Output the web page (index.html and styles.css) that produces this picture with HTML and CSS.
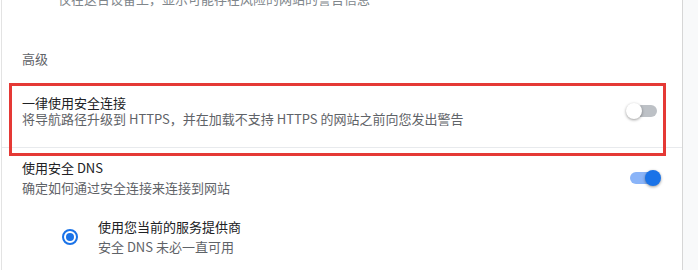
FILE: index.html
```html
<!DOCTYPE html>
<html lang="zh-CN">
<head>
    <meta charset="UTF-8">
    <title>安全</title>
    <link rel="stylesheet" href="styles.css">
</head>
<body>
    <div class="page">
        <div class="card">
            <div class="clip-line">仅在这台设备上，显示可能存在风险的网站的警告信息</div>
            <div class="section-title">高级</div>

            <div class="row row-first">
                <div class="row-text">
                    <div class="label">一律使用安全连接</div>
                    <div class="sub-label">将导航路径升级到 HTTPS，并在加载不支持 HTTPS 的网站之前向您发出警告</div>
                </div>
                <span class="toggle"><span class="track"></span><span class="knob"></span></span>
                <div class="highlight"></div>
            </div>

            <div class="row row-dns">
                <div class="row-text">
                    <div class="label">使用安全 DNS</div>
                    <div class="sub-label">确定如何通过安全连接来连接到网站</div>
                </div>
                <span class="toggle on"><span class="track"></span><span class="knob"></span></span>
            </div>

            <div class="radio-row">
                <span class="radio"><span class="dot"></span></span>
                <div class="row-text">
                    <div class="label">使用您当前的服务提供商</div>
                    <div class="sub-label">安全 DNS 未必一直可用</div>
                </div>
            </div>
        </div>
        <div class="side"></div>
    </div>
</body>
</html>
```

FILE: styles.css
```css
html, body {
    margin: 0;
    height: 270px;
    overflow: hidden;
}
body {
    font-family: "Noto Sans CJK SC", "Noto Sans", sans-serif;
    font-size: 13px;
    color: #202124;
    background: #fff;
}
.page {
    display: flex;
    height: 270px;
}
.card {
    box-sizing: border-box;
    width: 682px;
    margin-left: 1px;
    border-left: 1px solid #e3e3e3;
    border-right: 1px solid #d6d6d6;
    background: #fff;
    flex-shrink: 0;
}
.side {
    flex: 1;
    background: #f8f9fa;
}
.clip-line {
    margin-top: -11px;
    padding-left: 56px;
    line-height: 20px;
    color: #80868b;
}
.section-title {
    margin-top: 40px;
    padding-left: 20px;
    line-height: 20px;
    color: #5f6368;
}
.row {
    position: relative;
    display: flex;
    align-items: center;
    padding: 0 20px;
}
.row-text {
    flex: 1;
}
.sub-label {
    color: #5f6368;
}
.row-first {
    padding-top: 26px;
    padding-bottom: 20px;
    border-bottom: 1px solid #e8eaed;
    line-height: 16px;
}
.row-dns {
    padding-top: 10px;
    line-height: 20px;
}
.highlight {
    position: absolute;
    top: 14px;
    left: 7px;
    right: 16px;
    bottom: -9px;
    border: 3px solid #e53935;
}

/* toggle */
.toggle {
    position: relative;
    width: 36px;
    height: 16px;
    flex-shrink: 0;
}
.toggle .track {
    position: absolute;
    left: 4px;
    top: 2px;
    width: 27px;
    height: 12px;
    border-radius: 6px;
    background: #bdc1c6;
}
.toggle .knob {
    position: absolute;
    left: 0;
    top: 0;
    width: 16px;
    height: 16px;
    border-radius: 50%;
    background: #fff;
    box-shadow: 0 1px 3px rgba(0, 0, 0, 0.4);
}
.toggle.on .track {
    background: #8ab4f8;
}
.toggle.on .knob {
    left: 19px;
    background: #1a73e8;
}

/* radio */
.radio-row {
    display: flex;
    align-items: center;
    margin-top: 19px;
    padding-left: 60px;
    line-height: 20px;
}
.radio {
    box-sizing: border-box;
    width: 16px;
    height: 16px;
    margin-right: 20px;
    border: 2px solid #1a73e8;
    border-radius: 50%;
    display: flex;
    align-items: center;
    justify-content: center;
}
.radio .dot {
    width: 8px;
    height: 8px;
    border-radius: 50%;
    background: #1a73e8;
}
```
